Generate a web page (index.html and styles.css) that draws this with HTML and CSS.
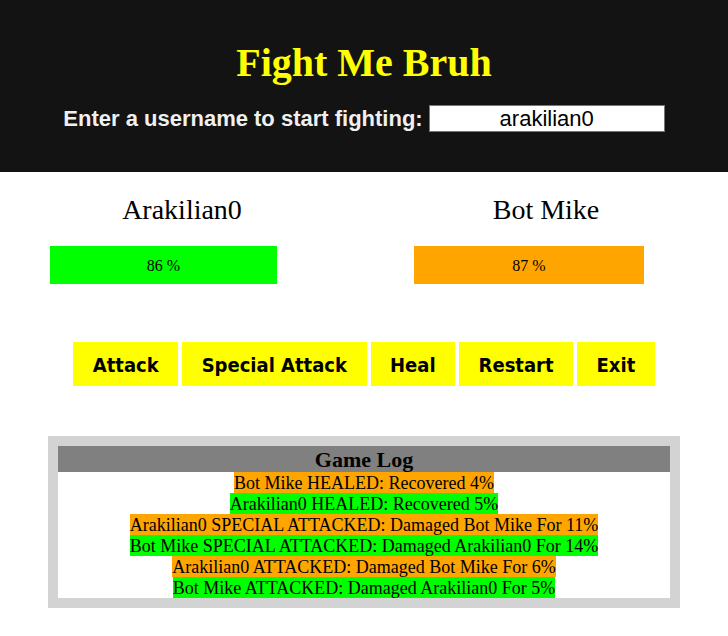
FILE: index.html
```html
<!DOCTYPE html>
<html>
<head>
<meta charset="utf-8">
<title>Fight Me Bruh</title>
<link rel="stylesheet" href="styles.css">
</head>
<body>
<header class="top">
  <h1 class="title">Fight Me Bruh</h1>
  <div class="login">
    <label class="login-label" for="user">Enter a username to start fighting:</label>
    <input class="login-input" id="user" type="text" value="arakilian0">
  </div>
</header>

<section class="arena">
  <div class="fighter">
    <h2 class="name">Arakilian0</h2>
    <div class="bar-track">
      <div class="bar bar-player" style="width: 86%">86 %</div>
    </div>
  </div>
  <div class="fighter">
    <h2 class="name">Bot Mike</h2>
    <div class="bar-track">
      <div class="bar bar-bot" style="width: 87%">87 %</div>
    </div>
  </div>
</section>

<div class="controls">
  <button class="btn">Attack</button>
  <button class="btn">Special Attack</button>
  <button class="btn">Heal</button>
  <button class="btn">Restart</button>
  <button class="btn">Exit</button>
</div>

<section class="log">
  <div class="log-inner">
    <h3 class="log-title">Game Log</h3>
    <ul class="log-list">
      <li class="entry entry-bot">Bot Mike HEALED: Recovered 4%</li>
      <li class="entry entry-player">Arakilian0 HEALED: Recovered 5%</li>
      <li class="entry entry-bot">Arakilian0 SPECIAL ATTACKED: Damaged Bot Mike For 11%</li>
      <li class="entry entry-player">Bot Mike SPECIAL ATTACKED: Damaged Arakilian0 For 14%</li>
      <li class="entry entry-bot">Arakilian0 ATTACKED: Damaged Bot Mike For 6%</li>
      <li class="entry entry-player">Bot Mike ATTACKED: Damaged Arakilian0 For 5%</li>
    </ul>
  </div>
</section>
</body>
</html>
```

FILE: styles.css
```css
* { box-sizing: border-box; }

html, body {
  margin: 0;
  padding: 0;
  background: #ffffff;
  font-family: "Liberation Serif", "Times New Roman", serif;
  color: #000;
}

.top {
  background: #131313;
  height: 172px;
  padding-top: 40px;
  display: flex;
  flex-direction: column;
  align-items: center;
}

.title {
  margin: 0;
  font-family: "Liberation Serif", serif;
  font-weight: bold;
  font-size: 40px;
  line-height: 46px;
  color: #ffff00;
}

.login {
  margin-top: 19px;
  display: flex;
  align-items: center;
  gap: 6px;
}

.login-label {
  font-family: "Liberation Sans", Arial, sans-serif;
  font-weight: bold;
  font-size: 22px;
  line-height: 27px;
  color: #f0f0f0;
}

.login-input {
  width: 236px;
  height: 27px;
  margin: 0;
  padding: 0;
  border: 1px solid #767676;
  background: #fff;
  text-align: center;
  font-family: "Liberation Sans", Arial, sans-serif;
  font-size: 22px;
  color: #000;
}

.arena {
  display: flex;
}

.fighter {
  width: 50%;
  padding: 22px 50px 0 50px;
}

.name {
  margin: 0;
  text-align: center;
  font-weight: normal;
  font-size: 28px;
  line-height: 32px;
}

.bar-track {
  margin-top: 20px;
  height: 38px;
}

.bar {
  height: 38px;
  line-height: 39px;
  text-align: center;
  font-size: 16px;
}

.bar-player { background: #00ff00; }
.bar-bot { background: #ffa500; }

.controls {
  margin-top: 58px;
  display: flex;
  justify-content: center;
  gap: 4px;
}

.btn {
  height: 44px;
  margin: 0;
  padding: 1px 19.5px 0 19.5px;
  border: none;
  background: #ffff00;
  color: #000;
  font-family: "DejaVu Sans Condensed", "DejaVu Sans", sans-serif;
  font-stretch: condensed;
  font-weight: bold;
  font-size: 20px;
}

.log {
  width: 632px;
  margin: 50px auto 0 auto;
  padding: 10px;
  background: #d3d3d3;
}

.log-inner {
  background: #fff;
}

.log-title {
  margin: 0;
  height: 26px;
  background: #808080;
  text-align: center;
  font-weight: bold;
  font-size: 22px;
  line-height: 27px;
}

.log-list {
  list-style: none;
  margin: 0;
  padding: 0;
}

.entry {
  width: fit-content;
  margin: 0 auto;
  font-size: 18px;
  line-height: 22px;
  height: 21px;
}

.entry-bot { background: #ffa500; }
.entry-player { background: #00ff00; }
```
